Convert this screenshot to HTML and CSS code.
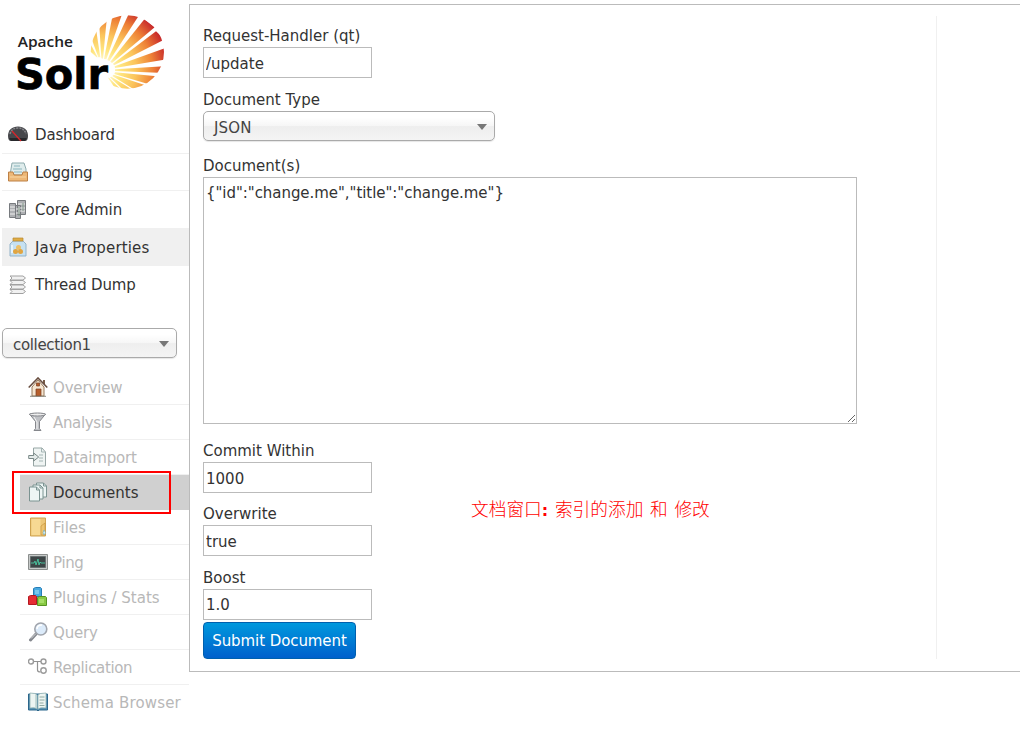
FILE: index.html
```html
<!DOCTYPE html>
<html lang="en">
<head>
<meta charset="utf-8">
<title>Solr Admin</title>
<link rel="stylesheet" href="styles.css">
</head>
<body>
<div class="app">
  <aside class="sidebar">
    <svg class="logo" viewBox="0 0 567 330">
      <defs>
        <radialGradient id="sun" gradientUnits="userSpaceOnUse" cx="305" cy="208" r="205">
          <stop offset="0.1" stop-color="#fffbe0"/><stop offset="0.28" stop-color="#ffe680"/><stop offset="0.5" stop-color="#fbc55c"/><stop offset="0.75" stop-color="#ee8136"/><stop offset="0.97" stop-color="#c92c2b"/>
        </radialGradient>
        <clipPath id="disc"><circle cx="382" cy="156" r="110"/></clipPath>
      </defs>
      <g clip-path="url(#disc)" fill="url(#sun)">
        <path d="M290 172L266 150L270 130L293 172z"/>
        <path d="M295 172L273 112L287 80L301 172z"/>
        <path d="M304 175L298 78L320 60L309 176z"/>
        <path d="M312 177L338 45L367 40L319 178z"/>
        <path d="M322 180L387 40L421 40L328 183z"/>
        <path d="M331 185L433 58L464 82L336 189z"/>
        <path d="M339 191L468 94L494 118L342 196z"/>
        <path d="M344 199L500 143L500 178L345 204z"/>
        <path d="M345 208L500 198L500 219L345 213z"/>
        <path d="M345 217L486 230L462 257L343 222z"/>
        <path d="M341 224L432 254L408 272L337 228z"/>
        <path d="M334 230L395 268L375 275L330 232z"/>
        <path d="M327 233L362 268L345 265L324 233z"/>
      </g>
      <text class="logo-small" x="53" y="141" textLength="166" lengthAdjust="spacingAndGlyphs">Apache</text>
      <text class="logo-big" x="45" y="266" textLength="279" lengthAdjust="spacingAndGlyphs">Solr</text>
    </svg>
    <nav class="menu">
      <a class="item"><svg class="icon" viewBox="0 0 20 20"><path d="M0 12C0 6 4 2.500 10 2.500S20 6 20 12C20 15 19 17 17 17H3C1 17 0 15 0 12z" fill="#46474b"/><path d="M2 10C3 6 6 4 10 4s7 2 8 6" fill="none" stroke="#85868a" stroke-width="1.500" stroke-dasharray="2 1"/><path d="M1 14h18l-2 3H3z" fill="#27282b"/><path d="M4 7l9 10" stroke="#d9252b" stroke-width="1.300"/></svg><span class="tight">Dashboard</span></a>
      <a class="item"><svg class="icon" viewBox="0 0 20 20"><path d="M3 7L4 1h12l2 6v6H2z" fill="#dfecec" stroke="#8eabae"/><path d="M6 4h6M5 7h9M6 10h8" stroke="#8ab5bd"/><path d="M.5 10H5l1 3h8l1-3h4.500v9H.5z" fill="#edb878" stroke="#bd8045"/><path d="M2 15h16" stroke="#f9d6a1"/></svg><span class="tighter">Logging</span></a>
      <a class="item"><svg class="icon" viewBox="0 0 20 20"><g fill="#aeb0b3" stroke="#777a7e"><path d="M9.500 1.500h8v14h-8zM1.500 4.500h6v14h-6zM7.500 6.500h5v13h-5z"/></g><path d="M10 5h7M10 9h7M10 12h7M2 8h5M2 11h5M2 15h5M8 10h4M8 14h4" stroke="#eee"/><path d="M15 4v8M11 8v9" stroke="#819988"/></svg><span>Core Admin</span></a>
      <a class="item item-hover"><svg class="icon" viewBox="0 0 20 20"><path d="M5 4L2 7v12h16V7l-3-3z" fill="#c6e1f2" stroke="#93b3c9"/><path d="M5 1h10v3H5z" fill="#dfac45" stroke="#b8862e" stroke-width=".7"/><circle cx="10.500" cy="10.500" r="2.500" fill="#edc067"/><circle cx="7.500" cy="14.500" r="2.500" fill="#e1a541"/><circle cx="12.500" cy="14.500" r="2.500" fill="#e1a541"/><path d="M4 8v8" stroke="#f1faff" stroke-width="1.500"/></svg><span class="loose">Java Properties</span></a>
      <a class="item"><svg class="icon" viewBox="0 0 20 20"><g fill="#f1f1f1" stroke="#a1a1a1"><path d="M2 1h13l2.500 2L15 5H2l2-2zM2 5.500h13l2.500 2L15 9.500H2l2-2zM2 10h13l2.500 2L15 14H2l2-2zM2 14.500h13l2.500 2L15 18.500H2l2-2z"/></g></svg><span class="tight">Thread Dump</span></a>
    </nav>
    <div class="chosen chosen-core"><span class="tighter">collection1</span><i class="arrow"></i></div>
    <nav class="submenu">
      <a class="sub"><svg class="icon" viewBox="0 0 20 20"><path d="M4 10l6-7 6 7v9H4z" fill="#f6e6d1" stroke="#96795b"/><path d="M15 3h2v5l-2-2z" fill="#775b48"/><path d="M.7 10.500L10 1l9.300 9.500" fill="none" stroke="#684d3f" stroke-width="1.600"/><path d="M8 12h5v7H8zM8.500 6h3v3h-3z" fill="#b65e2c" stroke="#783e22" stroke-width=".7"/><path d="M2 19.300h16" stroke="#8a8a80"/></svg><span class="tight">Overview</span></a>
      <a class="sub"><svg class="icon" viewBox="0 0 20 20"><path d="M1.500 2h16l-6 7.500v7l1.500 2H6l1.500-2v-7z" fill="#bfc1c5" stroke="#85878c"/><ellipse cx="9.500" cy="2.500" rx="8" ry="1.500" fill="#eee" stroke="#85878c"/><path d="M6 5l3 5v7" fill="none" stroke="#f4f4f4"/></svg><span class="tighter">Analysis</span></a>
      <a class="sub"><svg class="icon" viewBox="0 0 20 20"><path d="M5.500 1H14l3.500 4v14h-12z" fill="#eff4f3" stroke="#97a6a5"/><path d="M13.500 1v4h4M11 8h4M11 11h4M11 14h4" fill="none" stroke="#a4b5b4"/><path d="M.7 8.500h5V6l5 4-5 4v-2.500h-5z" fill="#e4eae9" stroke="#798887"/></svg><span class="tight">Dataimport</span></a>
      <a class="sub sub-active"><svg class="icon" viewBox="0 0 20 20"><g fill="#edf5f4" stroke="#7b9391"><path d="M8.500 1h7l3 3v11h-10z"/><path d="M5 3h7l3 3v11H5z"/><path d="M1.500 5h7l3 3v11h-10z"/></g><path d="M8.500 5v3h3M12 3v3h3M15.500 1v3h3" fill="none" stroke="#7b9391"/></svg><span>Documents</span></a>
      <a class="sub"><svg class="icon" viewBox="0 0 20 20"><path d="M2.500 1h15v18h-15z" fill="#edc778" stroke="#cfa452"/><path d="M3.500 2h9v16h-9z" fill="#f7d993"/><path d="M13 18V9l4-3v12z" fill="#edc370" stroke="#c9963d" stroke-width=".7"/><path d="M16 13q3 3 0 5q-2-2 0-5" fill="#d9f1f7" stroke="#68a3ae" stroke-width=".6"/></svg><span>Files</span></a>
      <a class="sub"><svg class="icon" viewBox="0 0 20 20"><path d="M.5 2.500h19v15H.5z" fill="#c7cac9" stroke="#8b8e8d"/><path d="M2.500 4.500h15v11h-15z" fill="#3d4546" stroke="#666e6f"/><path d="M3 11h3l1-2 1 4 2-6 1 6 1-3 1 1h4" fill="none" stroke="#48bd9a"/></svg><span class="tighter">Ping</span></a>
      <a class="sub"><svg class="icon" viewBox="0 0 20 20"><path d="M5.500 1.500l2-1h5l1 1v8h-8z" fill="#48a8df" stroke="#267eb8"/><path d="M.5 9.500l2-1h5l1 1v8h-8z" fill="#e52c33" stroke="#b51821"/><path d="M9.500 10.500l2-1h6l1 1v8h-9z" fill="#88c943" stroke="#569423"/><path d="M7 3h4v4H7z" fill="#78c8ed"/><path d="M11 12h5v4h-5z" fill="#a6de67"/></svg><span>Plugins / Stats</span></a>
      <a class="sub"><svg class="icon" viewBox="0 0 20 20"><path d="M8 12l-5.500 6" stroke="#85888e" stroke-width="3" stroke-linecap="round"/><path d="M8 11.500l-5 5" stroke="#dadbdd"/><circle cx="12.800" cy="7" r="6" fill="#dcebfa" stroke="#a1a5ad" stroke-width="1.600"/><path d="M9 7q0-4 5-4" fill="none" stroke="#fff" stroke-width="1.500"/></svg><span class="tight">Query</span></a>
      <a class="sub"><svg class="icon" viewBox="0 0 20 20"><path d="M6 4.500h7M9.500 5v8q0 2 3 2" fill="none" stroke="#929292" stroke-width="1.200"/><g fill="#fff" stroke="#9b9b9b" stroke-width="1.400"><circle cx="3" cy="4.500" r="2.500"/><circle cx="15.500" cy="4.500" r="2.500"/><circle cx="15.500" cy="13.500" r="2.700"/></g></svg><span class="tighter">Replication</span></a>
      <a class="sub"><svg class="icon" viewBox="0 0 20 20"><path d="M.5 2h19v16H11l-1 1-1-1H.5z" fill="#558fb1" stroke="#2b668b"/><path d="M2 1q6 0 7 2v14q-2-2-7-1zM18 1q-7 0-8 2v14q2-2 8-1z" fill="#edf5f2" stroke="#8aaead" stroke-width=".7"/><path d="M11.500 5h5M11.500 8h5M11.500 11h4M11.500 13.500h5" stroke="#90aaa2"/><path d="M8 3v13" stroke="#b8d1cf" stroke-width="1.500"/></svg><span class="loose">Schema Browser</span></a>
    </nav>
    <div class="highlight"></div>
  </aside>
  <main class="content">
    <form class="form">
      <label class="label" for="qt">Request-Handler (qt)</label>
      <input class="input" id="qt" value="/update">
      <label class="label">Document Type</label>
      <div class="chosen chosen-type"><span class="loose">JSON</span><i class="arrow"></i></div>
      <label class="label label-docs" for="docs">Document(s)</label>
      <textarea class="textarea" id="docs" spellcheck="false">{"id":"change.me","title":"change.me"}</textarea>
      <label class="label label-commit" for="commit">Commit Within</label>
      <input class="input" id="commit" value="1000">
      <label class="label label-over" for="over">Overwrite</label>
      <input class="input" id="over" value="true">
      <label class="label" for="boost">Boost</label>
      <input class="input input-boost" id="boost" value="1.0">
      <button class="submit" type="button">Submit Document</button>
    </form>
    <div class="result"></div>
  </main>
  <div class="note">文档窗口<b>:</b> 索引的添加 和 修改</div>
</div>
</body>
</html>
```
FILE: styles.css
```css
* { box-sizing: border-box; }
body { margin: 0; background: #fff; color: #333; font: 15px/18px "DejaVu Sans", Verdana, sans-serif; overflow: hidden; }
.app { position: relative; display: flex; width: 1020px; height: 731px; overflow: hidden; }
.sidebar { position: relative; flex: none; width: 189px; }
.logo { display: block; width: 189px; height: 110px; }
.logo-small { font: 600 42px "Open Sans", sans-serif; fill: #222; }
.logo-big { font: bold 126px "DejaVu Sans", sans-serif; fill: #000; stroke: #000; stroke-width: 2px; }
.menu { margin: 6px 0 0 2px; }
.item { display: flex; align-items: center; gap: 7px; height: 37.5px; padding-left: 6px; border-bottom: 1px solid #f0f0f0; white-space: nowrap; }
.item:last-child { border-bottom: 0; }
.item span, .sub span, .chosen-core span { padding-top: 2px; }
.item:last-child span { padding-top: 0; }
.item-hover { background: #f0f0f0; }
.tight { letter-spacing: -0.16px; }
.tighter { letter-spacing: -0.34px; }
.loose { letter-spacing: 0.14px; }
.icon { flex: none; width: 20px; height: 20px; }
.chosen { display: flex; align-items: center; justify-content: space-between; height: 30px; padding: 2px 7px 0 10px; border: 1px solid #aaa; border-radius: 5px; background: linear-gradient(#fff 20%, #f6f6f6 50%, #eee 52%, #f4f4f4 100%); box-shadow: 0 1px 1px rgba(0,0,0,.1); color: #444; }
.chosen-core { width: 175px; margin: 24px 0 0 2px; }
.chosen-type { width: 292px; }
.chosen-type span { padding-top: 2px; }
.arrow { width: 0; height: 0; border: 5.5px solid transparent; border-top: 6px solid #777; border-bottom: 0; }
.submenu { margin: 12px 0 0 20px; }
.sub { display: flex; align-items: center; gap: 5px; height: 35px; padding-left: 8px; border-bottom: 1px solid #f0f0f0; color: #b8b8b8; white-space: nowrap; }
.sub:last-child { border-bottom: 0; }
.sub-active { background: #d0d0d0; border-color: #d0d0d0; color: #333; }
.highlight { position: absolute; left: 12px; top: 471px; width: 159px; height: 43px; border: 2px solid #f00; }
.content { display: flex; flex: none; width: 840px; height: 668px; margin-top: 4px; padding: 11px 0 12px 13px; border: 1px solid #bbb; }
.form { display: flex; flex-direction: column; align-items: flex-start; width: 733px; padding-top: 11px; }
.result { flex: 1; border-left: 1px solid #f0f0f0; }
.label { height: 20px; margin-top: 13px; line-height: 18px; }
.label:first-child { margin-top: 0; }
.label-docs { height: 20px; margin-top: 16px; }
.label-commit { height: 20px; margin-top: 18px; }
.label-over { margin-top: 12px; }
.input, .textarea { display: block; margin: 0; border: 1px solid #bbb; border-radius: 0; background: #fff; color: #333; font: inherit; outline: 0; }
.input { width: 169px; height: 31px; padding: 2px 2px 0; }
.input-boost { padding-top: 0; }
.textarea { width: 654px; height: 247px; padding: 6px 2px; resize: both; letter-spacing: -0.05px; }
.submit { width: 153px; height: 37px; margin-top: 2px; padding: 0; border: 1px solid #0060ae; border-radius: 4px; background: linear-gradient(#0099dd, #0060cc); color: #fff; font: inherit; letter-spacing: -0.08px; }
.note { position: absolute; left: 471px; top: 496px; color: #f00; font: 300 17.7px/24px "Noto Sans CJK SC", sans-serif; white-space: pre; word-spacing: 2.8px; }
.note b { font: bold 16px "DejaVu Sans", sans-serif; }
```
